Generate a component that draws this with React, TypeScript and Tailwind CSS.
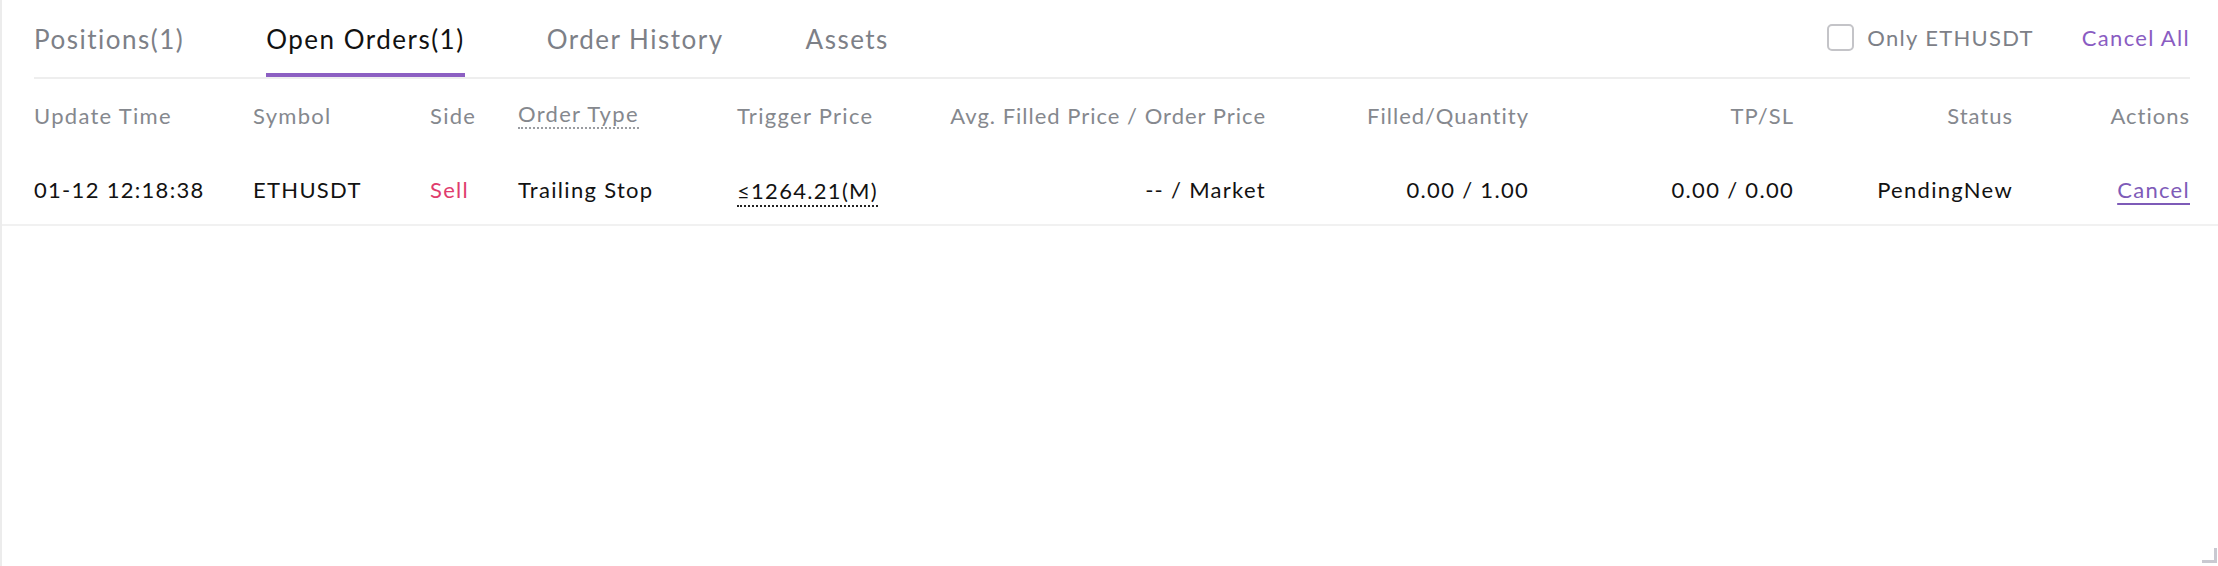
import React from "react";

type Col = { key: string; label: string; w: string; right?: boolean; dotted?: boolean };

const cols: Col[] = [
  { key: "time", label: "Update Time", w: "w-[219px]" },
  { key: "symbol", label: "Symbol", w: "w-[177px]" },
  { key: "side", label: "Side", w: "w-[88px]" },
  { key: "type", label: "Order Type", w: "w-[219px]", dotted: true },
  { key: "trigger", label: "Trigger Price", w: "w-[163px]" },
  { key: "price", label: "Avg. Filled Price / Order Price", w: "w-[366px]", right: true },
  { key: "qty", label: "Filled/Quantity", w: "w-[263px]", right: true },
  { key: "tpsl", label: "TP/SL", w: "w-[265px]", right: true },
  { key: "status", label: "Status", w: "w-[219px]", right: true },
  { key: "actions", label: "Actions", w: "w-[177px]", right: true },
];

const tabs = [
  { label: "Positions(1)" },
  { label: "Open Orders(1)", active: true },
  { label: "Order History" },
  { label: "Assets" },
];

function Cell({ col, children }: { col: Col; children: React.ReactNode }) {
  return (
    <div className={`${col.w} shrink-0 flex items-center ${col.right ? "justify-end" : "justify-start"}`}>
      {children}
    </div>
  );
}

export default function App() {
  return (
    <div
      className="relative h-[566px] w-[2218px] overflow-hidden border-l-2 border-[#ececec] bg-white"
      style={{ fontFamily: "Lato, 'Noto Sans', sans-serif" }}
    >
      {/* tabs bar */}
      <div className="mx-[32px] mr-[28px] flex items-start justify-between border-b-2 border-[#eeeeee]">
        <div className="flex gap-[82px]">
          {tabs.map((t) => (
            <div key={t.label} className="flex flex-col pt-[23px]">
              <span
                className={`text-[26px] leading-[32px] tracking-[1.5px] whitespace-nowrap ${
                  t.active ? "text-[#111111]" : "text-[#7d8087]"
                }`}
              >
                {t.label}
              </span>
              <span className={`mt-[18px] h-[4px] ${t.active ? "bg-[#8c5fc2]" : "bg-transparent"}`} />
            </div>
          ))}
        </div>
        <div className="flex h-[77px] items-center gap-[48px] pb-[2px] text-[22px] tracking-[1.3px]">
          <label className="flex items-center gap-[13px]">
            <span className="h-[27px] w-[27px] rounded-[5px] border-2 border-[#c4c4c8] bg-white" />
            <span className="text-[#7d8087]">Only ETHUSDT</span>
          </label>
          <span className="text-[#8a5cc2]">Cancel All</span>
        </div>
      </div>

      {/* header */}
      <div className="flex h-[72px] px-[32px] text-[22px] tracking-[1.3px] text-[#85888e]">
        {cols.map((c) => (
          <Cell key={c.key} col={c}>
            {c.dotted ? (
              <span className="border-b-2 border-dotted border-[#9a9ca1] leading-[26px]">{c.label}</span>
            ) : (
              <span className={`whitespace-nowrap ${c.right ? "tracking-[1px]" : ""}`}>{c.label}</span>
            )}
          </Cell>
        ))}
      </div>

      {/* order row */}
      <div className="flex h-[75px] border-b-2 border-[#f1f1f1] px-[32px] pt-[3px] text-[22px] tracking-[1.3px] text-[#121212]">
        <Cell col={cols[0]}>01-12 12:18:38</Cell>
        <Cell col={cols[1]}>ETHUSDT</Cell>
        <Cell col={cols[2]}>
          <span className="text-[#e03c6d]">Sell</span>
        </Cell>
        <Cell col={cols[3]}>Trailing Stop</Cell>
        <Cell col={cols[4]}>
          <span className="mt-[6px] border-b-2 border-dotted border-[#222222] leading-[28px] whitespace-nowrap">
            ≤1264.21(M)
          </span>
        </Cell>
        <Cell col={cols[5]}>-- / Market</Cell>
        <Cell col={cols[6]}>0.00 / 1.00</Cell>
        <Cell col={cols[7]}>0.00 / 0.00</Cell>
        <Cell col={cols[8]}>PendingNew</Cell>
        <Cell col={cols[9]}>
          <span className="text-[#7e5bb8] underline decoration-2 underline-offset-[5px]">Cancel</span>
        </Cell>
      </div>

      {/* resize grip */}
      <span className="absolute bottom-[3px] right-[1px] h-[15px] w-[3px] bg-[#c9c9d1]" />
      <span className="absolute bottom-[3px] right-[1px] h-[3px] w-[15px] bg-[#c9c9d1]" />
    </div>
  );
}
